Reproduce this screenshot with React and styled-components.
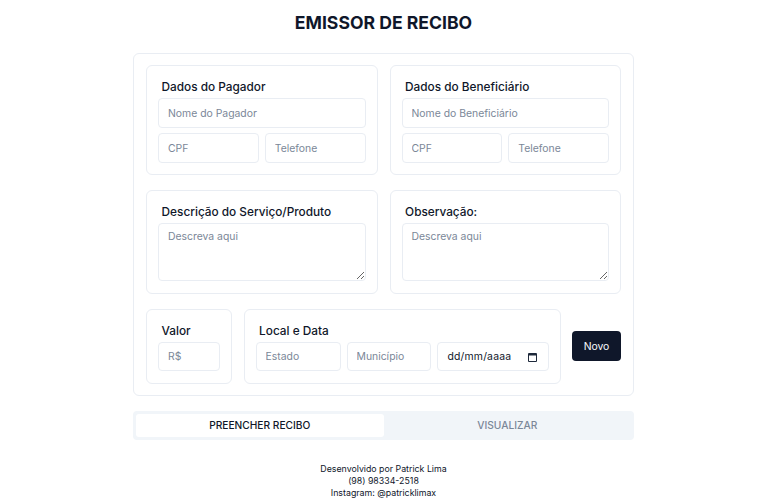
import React from 'react'
import styled, { createGlobalStyle } from 'styled-components'

const GlobalStyle = createGlobalStyle`
  * {
    box-sizing: border-box;
  }

  html,
  body {
    margin: 0;
    height: 500px;
    overflow: hidden;
    background: #fff;
    font-family: Inter, "Liberation Sans", sans-serif;
    color: #0f172a;
  }
`

const Page = styled.div`
  width: 767px;
  display: flex;
  flex-direction: column;
  align-items: center;
`

const Title = styled.h1`
  margin: 0;
  padding-top: 11px;
  height: 53.3px;
  font-size: 17.6px;
  line-height: 24px;
  font-weight: 700;
  color: #0f172a;
`

const Panel = styled.div`
  width: 501px;
  padding: 11px 12px;
  border: 1px solid #e9edf3;
  border-radius: 6px;
  display: flex;
  flex-direction: column;
  gap: 15px;
`

const Row = styled.div`
  display: flex;
  gap: ${props => props.$gap || 12}px;
`

const Card = styled.section`
  flex: ${props => (props.$width ? `0 0 ${props.$width}px` : '1 1 0')};
  min-width: 0;
  padding: 11px 11px 11.5px;
  border: 1px solid #e9edf3;
  border-radius: 6px;
  display: flex;
  flex-direction: column;
  justify-content: flex-end;
`

const Label = styled.h2`
  margin: 0 0 1px 3.6px;
  font-size: 11.8px;
  line-height: 20px;
  font-weight: 500;
  color: #0f172a;
`

const Fields = styled.div`
  display: flex;
  gap: 6px;
  margin-top: ${props => props.$top || 0}px;
`

const Input = styled.input`
  display: block;
  flex: none;
  width: 100%;
  height: 29.5px;
  padding: 0 9px;
  border: 1px solid #e9edf3;
  border-radius: 4px;
  outline: none;
  background: #fff;
  font-family: inherit;
  font-size: 10.4px;
  color: #0f172a;

  &::placeholder {
    color: #7b8798;
    opacity: 1;
  }
`

const FieldInput = styled(Input)`
  flex: ${props => (props.$width ? `0 0 ${props.$width}px` : '1 1 0')};
  min-width: 0;
`

const DateField = styled.div`
  flex: 0 0 ${props => props.$width}px;
  height: 29.5px;
  padding: 0 11px 0 10px;
  border: 1px solid #e9edf3;
  border-radius: 4px;
  display: flex;
  align-items: center;
  justify-content: space-between;
  font-size: 10.4px;
  letter-spacing: 0.2px;
  color: #0f172a;
`

const TextArea = styled.textarea`
  display: block;
  width: 100%;
  height: 58px;
  padding: 5px 9px;
  border: 1px solid #e9edf3;
  border-radius: 4px;
  outline: none;
  font-family: inherit;
  font-size: 10.4px;
  line-height: 15px;

  &::placeholder {
    color: #7b8798;
    opacity: 1;
  }
`

const NewButton = styled.button`
  flex: 1 1 0;
  align-self: center;
  height: 30px;
  padding: 0;
  border: 0;
  border-radius: 4px;
  background: #0f172a;
  color: #f8fafc;
  font-family: inherit;
  font-size: 10.4px;
  font-weight: 400;
`

const Tabs = styled.div`
  width: 501px;
  height: 28.6px;
  margin-top: 15.3px;
  padding: 2.6px 3px;
  border-radius: 4px;
  background: #f1f5f9;
  display: flex;
`

const Tab = styled.div`
  flex: 1 1 0;
  border-radius: 3px;
  background: ${props => (props.$active ? '#fff' : 'transparent')};
  color: ${props => (props.$active ? '#0f172a' : '#7b8798')};
  font-size: 10.2px;
  font-weight: 500;
  line-height: 23.4px;
  text-align: center;
`

const Footer = styled.footer`
  margin-top: 23px;
  font-size: 8.8px;
  line-height: 12px;
  text-align: center;
  color: #0f172a;
`

const CalendarIcon = () => (
  <svg width="9" height="10" viewBox="0 0 9 10" aria-hidden="true">
    <path d="M1 1h7a1 1 0 0 1 1 1v7a1 1 0 0 1-1 1H1a1 1 0 0 1-1-1V2a1 1 0 0 1 1-1zM1 3.5V9h7V3.5z" fill="#1e293b" fillRule="evenodd" />
  </svg>
)

const App = () => {
  return (
    <Page>
      <GlobalStyle />
      <Title>EMISSOR DE RECIBO</Title>
      <Panel>
        <Row>
          <Card>
            <Label>Dados do Pagador</Label>
            <Input placeholder="Nome do Pagador" />
            <Fields $top={5.5}>
              <FieldInput placeholder="CPF" />
              <FieldInput placeholder="Telefone" />
            </Fields>
          </Card>
          <Card>
            <Label>Dados do Beneficiário</Label>
            <Input placeholder="Nome do Beneficiário" />
            <Fields $top={5.5}>
              <FieldInput placeholder="CPF" />
              <FieldInput placeholder="Telefone" />
            </Fields>
          </Card>
        </Row>
        <Row>
          <Card>
            <Label>Descrição do Serviço/Produto</Label>
            <TextArea placeholder="Descreva aqui" />
          </Card>
          <Card>
            <Label>Observação:</Label>
            <TextArea placeholder="Descreva aqui" />
          </Card>
        </Row>
        <Row $gap={11.5}>
          <Card $width={86}>
            <Label>Valor</Label>
            <Input placeholder="R$" />
          </Card>
          <Card $width={317}>
            <Label>Local e Data</Label>
            <Fields>
              <FieldInput $width={85} placeholder="Estado" />
              <FieldInput $width={84} placeholder="Município" />
              <DateField $width={112}>
                dd/mm/aaaa
                <CalendarIcon />
              </DateField>
            </Fields>
          </Card>
          <NewButton>Novo</NewButton>
        </Row>
      </Panel>
      <Tabs>
        <Tab $active>PREENCHER RECIBO</Tab>
        <Tab>VISUALIZAR</Tab>
      </Tabs>
      <Footer>
        Desenvolvido por Patrick Lima
        <br />
        (98) 98334-2518
        <br />
        Instagram: @patricklimax
      </Footer>
    </Page>
  )
}

export default App
